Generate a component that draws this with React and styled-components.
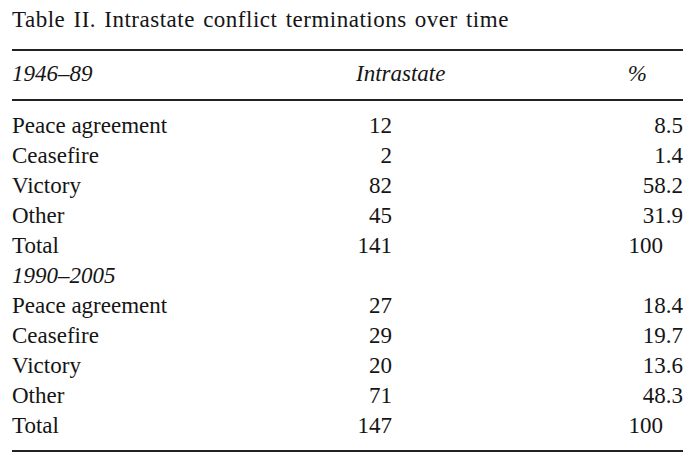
import React from "react";
import styled, { createGlobalStyle } from "styled-components";

const GlobalStyle = createGlobalStyle`
  body {
    margin: 0;
    background: #fff;
    color: #151515;
  }
`;

const Page = styled.div`
  width: 671px;
  padding: 5px 14px 0 12px;
  font-family: "Liberation Serif", "DejaVu Serif", serif;
  font-size: 23px;
  line-height: 30px;
`;

const Caption = styled.div`
  margin-bottom: 14px;
  white-space: nowrap;
  letter-spacing: 0.5px;
  word-spacing: 2px;
`;

const Rule = styled.div`
  height: 2px;
  background: #222;
`;

const Grid = styled.div`
  display: grid;
  grid-template-columns: 300px 131px 1fr;
  padding: ${(props) => props.$pad || "0"};
`;

const Cell = styled.div`
  white-space: nowrap;
  text-align: ${(props) => props.$align || "left"};
  padding-left: ${(props) => props.$left || "0"};
  padding-right: ${(props) => props.$right || "0"};
  font-style: ${(props) => (props.$italic ? "italic" : "normal")};
`;

const SubHead = styled.div`
  grid-column: 1 / -1;
  font-style: italic;
`;

const periods = [
  {
    label: "1946–89",
    rows: [
      ["Peace agreement", "12", "8.5"],
      ["Ceasefire", "2", "1.4"],
      ["Victory", "82", "58.2"],
      ["Other", "45", "31.9"],
      ["Total", "141", "100"],
    ],
  },
  {
    label: "1990–2005",
    rows: [
      ["Peace agreement", "27", "18.4"],
      ["Ceasefire", "29", "19.7"],
      ["Victory", "20", "13.6"],
      ["Other", "71", "48.3"],
      ["Total", "147", "100"],
    ],
  },
];

const App = () => {
  return (
    <>
      <GlobalStyle />
      <Page>
        <Caption>Table II. Intrastate conflict terminations over time</Caption>
        <Rule />
        <Grid $pad="8px 0 10px">
          <Cell $italic>{periods[0].label}</Cell>
          <Cell $italic $left="44px">Intrastate</Cell>
          <Cell $italic $align="right" $right="36px">%</Cell>
        </Grid>
        <Rule />
        <Grid $pad="10px 0 9px">
          {periods.map((period, i) => (
            <React.Fragment key={period.label}>
              {i > 0 && <SubHead>{period.label}</SubHead>}
              {period.rows.map(([name, count, pct]) => (
                <React.Fragment key={period.label + name}>
                  <Cell>{name}</Cell>
                  <Cell $align="right" $right="51px">{count}</Cell>
                  {/* whole numbers sit on the decimal point of the others */}
                  <Cell $align="right" $right={pct.includes(".") ? "0" : "20px"}>
                    {pct}
                  </Cell>
                </React.Fragment>
              ))}
            </React.Fragment>
          ))}
        </Grid>
        <Rule />
      </Page>
    </>
  );
};

export default App;
